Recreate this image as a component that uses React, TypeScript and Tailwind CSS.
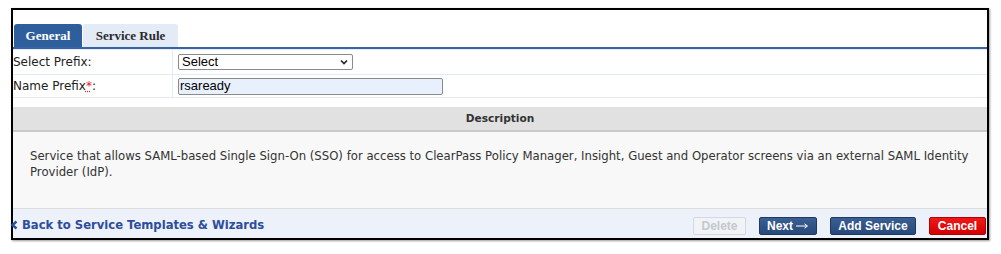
export default function App() {
  return (
    <div className="w-[1001px] h-[254px] bg-white pt-2 pl-[11px]">
      <div className="w-[978px] h-[232px] border-2 border-black shadow-[1px_1px_2px_rgba(0,0,0,0.4)] flex flex-col bg-white">
        {/* tabs */}
        <div className="h-[37px] flex items-end gap-px pl-px font-['Liberation_Serif',serif] font-bold text-[13px]">
          <div className="w-[68px] h-[23px] flex items-center justify-center rounded-t-[3px] bg-[#2f5e9c] text-white">
            General
          </div>
          <div className="w-[95px] h-[23px] flex items-center justify-center rounded-t-[3px] bg-[#e3ebf7] text-[#2b2b2b]">
            Service Rule
          </div>
        </div>
        <div className="h-[2px] bg-[#3864a4]" />
        <div className="h-px bg-[#e4ecf8]" />

        {/* form rows */}
        <div className="font-['DejaVu_Sans',sans-serif] text-[12px] text-[#222]">
          <div className="flex h-[25px] border-b border-[#e4eaf5]">
            <div className="w-[160px] flex items-center border-r border-[#e4eaf5]">Select Prefix:</div>
            <div className="flex items-center pl-[5px]">
              <div className="w-[175px] h-[16px] border border-[#8a8a8a] rounded-[2px] bg-white flex items-center justify-between px-[3px] font-['Liberation_Sans',sans-serif] text-[13px] text-black">
                <span>Select</span>
                <svg width="10" height="10" viewBox="0 0 10 10">
                  <path d="M2 3.5 L5 6.5 L8 3.5" fill="none" stroke="#222" strokeWidth="1.6" />
                </svg>
              </div>
            </div>
          </div>
          <div className="flex h-[23px] border-b border-[#e4eaf5]">
            <div className="w-[160px] flex items-center border-r border-[#e4eaf5]">
              Name Prefix<span className="text-[#e02020] underline decoration-dotted">*</span>:
            </div>
            <div className="flex items-center pl-[5px]">
              <div className="w-[265px] h-[17px] border border-[#8a8a8a] rounded-[2px] bg-[#e8f0fe] flex items-center px-px font-['Liberation_Sans',sans-serif] text-[13px] text-black">
                rsaready
              </div>
            </div>
          </div>
        </div>

        <div className="h-[9px]" />

        {/* description */}
        <div className="h-[25px] bg-[#e1e1e1] border-b-2 border-[#c9c9c9] flex items-center justify-center font-['DejaVu_Sans',sans-serif] font-bold text-[10.6px] text-[#333]">
          Description
        </div>
        <div className="flex-1 bg-[#f8f8f8] pl-[17px] pr-3 pt-4 font-['DejaVu_Sans',sans-serif] text-[11.7px] leading-[16px] text-[#333] border-b border-[#dcdcdc]">
          Service that allows SAML-based Single Sign-On (SSO) for access to ClearPass Policy Manager, Insight, Guest and Operator screens via an external SAML Identity Provider (IdP).
        </div>

        {/* footer */}
        <div className="h-[29px] bg-[#edf1f9] flex items-center justify-between pr-px pt-1">
          <div className="flex items-center font-['DejaVu_Sans',sans-serif] font-bold text-[11.6px] text-[#2c4d9c] -ml-[3px]">
            <svg width="9" height="10" viewBox="0 0 9 10" className="mr-[3px]">
              <path d="M6.5 1.5 L2.5 5 L6.5 8.5" fill="none" stroke="#2c4d9c" strokeWidth="2.4" />
            </svg>
            Back to Service Templates &amp; Wizards
          </div>
          <div className="flex items-center gap-[13px] font-['Liberation_Sans',sans-serif] font-bold text-[12px]">
            <div className="w-[53px] h-[18px] rounded-[2px] border border-[#d3d9e1] bg-[#f1f3f6] text-[#c3c8cf] flex items-center justify-center">
              Delete
            </div>
            <div className="w-[58px] h-[18px] rounded-[2px] border border-[#1e3a62] bg-gradient-to-b from-[#3a5f92] to-[#28497a] text-white flex items-center justify-center gap-[3px]">
              Next
              <svg width="13" height="6" viewBox="0 0 13 6">
                <path d="M0 3 H11 M8.5 0.8 L11.5 3 L8.5 5.2" fill="none" stroke="white" strokeWidth="1" />
              </svg>
            </div>
            <div className="w-[86px] h-[18px] rounded-[2px] border border-[#1e3a62] bg-gradient-to-b from-[#3a5f92] to-[#28497a] text-white flex items-center justify-center">
              Add Service
            </div>
            <div className="w-[57px] h-[18px] rounded-[2px] border border-[#b00000] bg-gradient-to-b from-[#f01818] to-[#d20000] text-white flex items-center justify-center">
              Cancel
            </div>
          </div>
        </div>
      </div>
    </div>
  );
}
